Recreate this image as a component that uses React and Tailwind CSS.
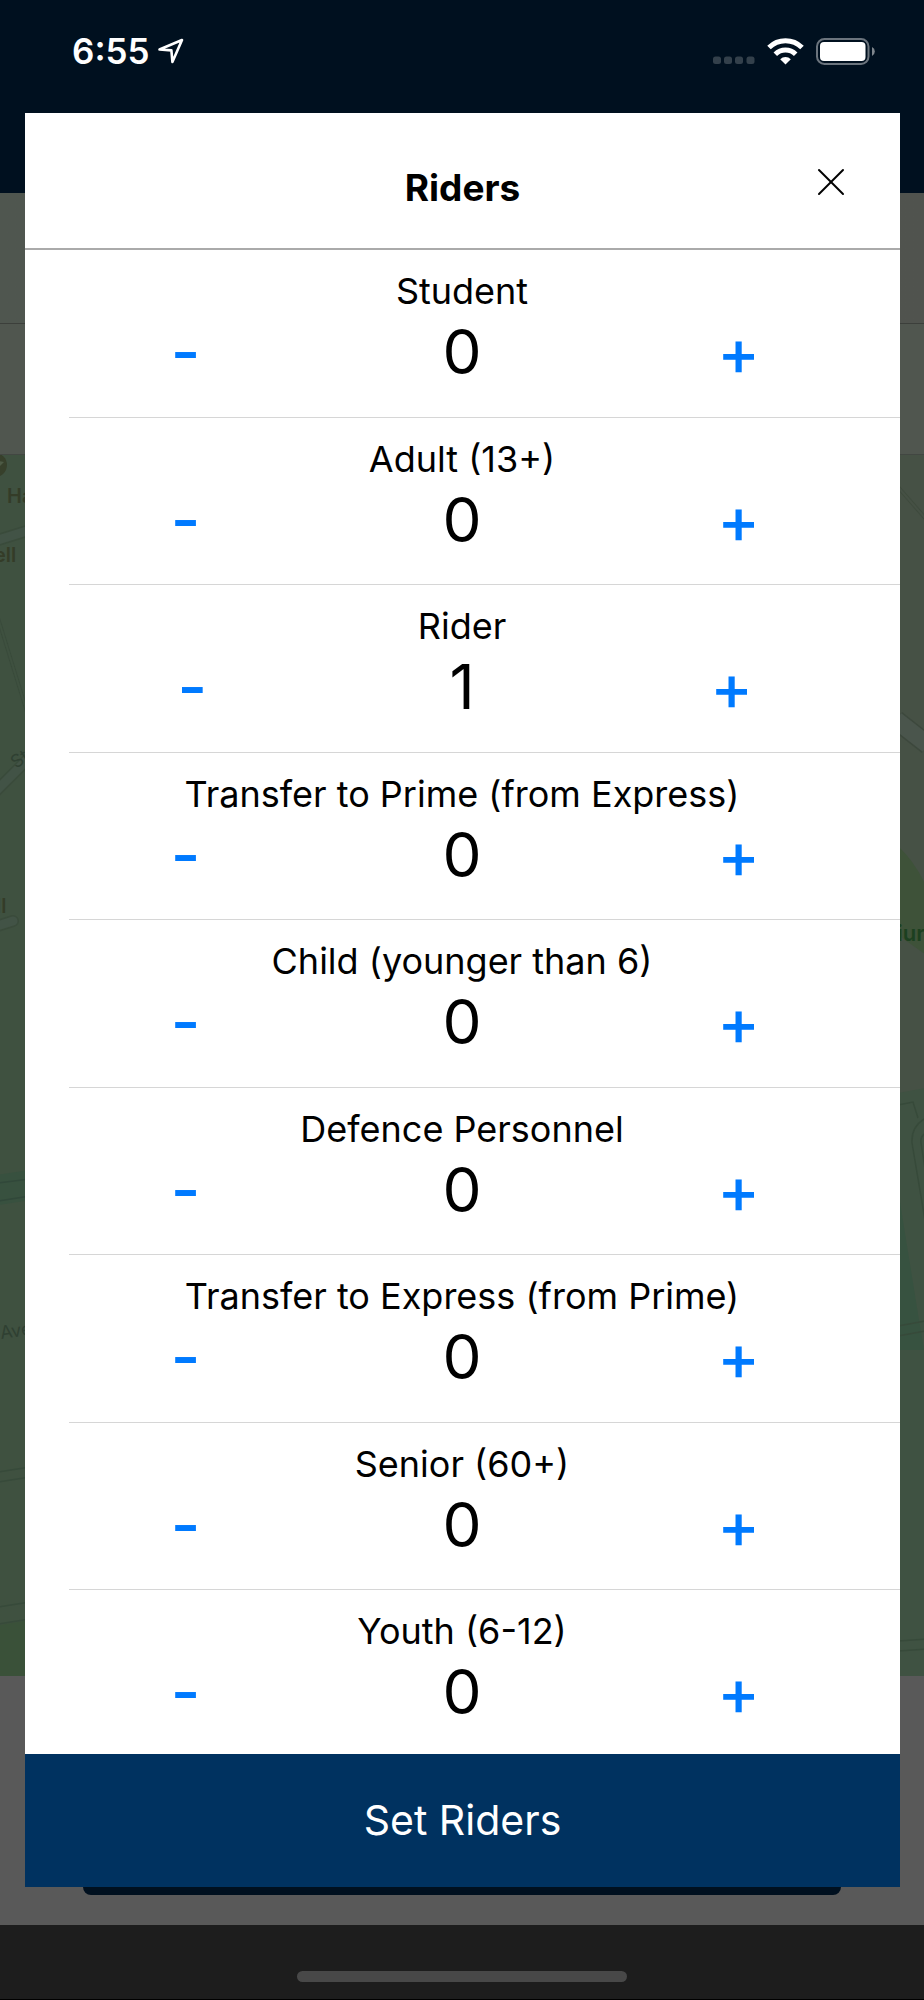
import { useState } from "react"
import { LuX } from "react-icons/lu"

const initialRiders = [
    { id: 'student', label: 'Student', count: 0 },
    { id: 'adult', label: 'Adult (13+)', count: 0 },
    { id: 'rider', label: 'Rider', count: 1 },
    { id: 'to-prime', label: 'Transfer to Prime (from Express)', count: 0 },
    { id: 'child', label: 'Child (younger than 6)', count: 0 },
    { id: 'defence', label: 'Defence Personnel', count: 0 },
    { id: 'to-express', label: 'Transfer to Express (from Prime)', count: 0 },
    { id: 'senior', label: 'Senior (60+)', count: 0 },
    { id: 'youth', label: 'Youth (6-12)', count: 0 },
]

function StatusBar() {
    return (
        <div className="flex h-[193px] items-start justify-between bg-[#00101f] pl-[72px] pr-12 pt-[31px] text-white">
            <div className="flex h-10 items-center gap-2">
                <span className="text-[35px] font-semibold">6:55</span>
                <svg width="26" height="26" viewBox="0 0 26 26" fill="none" stroke="currentColor" strokeWidth="2.6" strokeLinejoin="round">
                    <path d="M1.5 11.5 L24 2 L14.4 24 L13.4 12.4 Z" />
                </svg>
            </div>
            <div className="flex h-10 items-center gap-3">
                <svg width="42" height="26" viewBox="0 0 42 26" fill="#33404b">
                    <rect x="0" y="18.5" width="8" height="7.5" rx="2.5" />
                    <rect x="11" y="18.5" width="8" height="7.5" rx="2.5" />
                    <rect x="22" y="18.5" width="8" height="7.5" rx="2.5" />
                    <rect x="33.5" y="18.5" width="8" height="7.5" rx="2.5" />
                </svg>
                <svg width="37" height="27" viewBox="0 0 37 27" fill="none" stroke="currentColor" strokeWidth="5">
                    <path d="M2 9.5 A23.5 23.5 0 0 1 35 9.5" />
                    <path d="M8.3 16.2 A14.5 14.5 0 0 1 28.7 16.2" />
                    <path d="M18.5 26.5 L13.2 21.2 A7.6 7.6 0 0 1 23.8 21.2 Z" fill="currentColor" stroke="none" />
                </svg>
                <svg width="60" height="27" viewBox="0 0 60 27">
                    <rect x="1" y="1" width="51.5" height="25" rx="7.5" fill="none" stroke="#6b747d" strokeWidth="2" />
                    <rect x="4" y="4" width="45.5" height="19" rx="4" fill="#fff" />
                    <path d="M56 9 A5 5 0 0 1 56 18 Z" fill="#7f868d" />
                </svg>
            </div>
        </div>
    )
}

function Map() {
    return (
        <svg className="min-h-0 w-full flex-1" viewBox="0 455 924 1221" preserveAspectRatio="xMidYMid slice" aria-hidden="true">
            <rect x="0" y="455" width="462" height="1221" fill="#3f5140" />
            <rect x="462" y="455" width="462" height="1221" fill="#465145" />

            {/* West side */}
            <circle cx="-5" cy="465" r="12" fill="#37402b" />
            <path d="M-2 461 L4 462 L0 466 Z" fill="#4d5a45" />
            <g fill="none">
                <path d="M-2 540 L30 530" stroke="#3a4b3b" strokeWidth="12" />
                <path d="M-2 540 L30 530" stroke="#425346" strokeWidth="9" />
                <path d="M-2 618 L27 712" stroke="#3a4b3b" strokeWidth="4" />
                <path d="M-2 618 L27 712" stroke="#3f5140" strokeWidth="2" />
                <path d="M-6 793 L30 757" stroke="#3a4b3b" strokeWidth="12" />
                <path d="M-6 793 L30 757" stroke="#425346" strokeWidth="9" />
                <path d="M-6 927 L13 921" stroke="#3a4b3b" strokeWidth="12" strokeLinecap="round" />
                <path d="M-6 927 L13 921" stroke="#425346" strokeWidth="9" strokeLinecap="round" />
                <path d="M-2 1190 L30 1185" stroke="#38513f" strokeWidth="30" />
                <path d="M-2 1183 L30 1179 M-2 1201 L30 1196" stroke="#31483a" strokeWidth="1.5" />
                <path d="M-2 1472 L30 1467 M-2 1482 L30 1477" stroke="#374a3a" strokeWidth="1.5" />
                <path d="M-2 1607 L30 1602 M-2 1624 L30 1619" stroke="#374a3a" strokeWidth="1.5" />
            </g>
            <path d="M0 1625 L30 1620 V1676 H0 Z" fill="#3a5139" />
            <g fontSize="20" fontWeight="600" fill="#343c28">
                <text x="7" y="503">Ha</text>
                <text x="-6" y="562">ell</text>
                <text x="-4" y="913">ll</text>
            </g>
            <g fontSize="18" fill="#2f4032">
                <text x="16" y="769" transform="rotate(-35 16 769)">St</text>
                <text x="1" y="1339" transform="rotate(-8 1 1339)">Ave</text>
            </g>

            {/* East side */}
            <g fill="none">
                <path d="M898 487 L926 519" stroke="#3f4b3e" strokeWidth="4" />
                <path d="M898 487 L926 519" stroke="#465145" strokeWidth="2" />
                <path d="M896 720 L928 745" stroke="#3d483d" strokeWidth="20" />
                <path d="M896 720 L928 745" stroke="#4a554c" strokeWidth="17" />
            </g>
            <path d="M898 846 Q915 862 926 886 V955 L898 935 Z" fill="#3e5239" />
            <text x="897" y="941" fontSize="22" fontWeight="600" fill="#1c4020">iur</text>
            <path d="M898 1093 L926 1088 V1676 H898 Z" fill="#3f5242" />
            <path d="M898 1190 L919 1320 L924 1350 H898 Z" fill="#375240" />
            <g fill="none" stroke="#374a3a" strokeWidth="1.5">
                <path d="M898 1105 L913 1102 L918 1118" />
                <path d="M926 1118 Q911 1126 912 1143 L926 1226" />
                <path d="M926 1133 Q920 1136 921 1143 L926 1175" />
                <path d="M898 1326 L926 1321 M898 1336 L926 1331" />
                <path d="M898 1641 L926 1639 M898 1651 L926 1649" />
            </g>
        </svg>
    )
}

function RiderRow({ rider, onChange }) {
    return (
        <li className="flex pl-[44px]">
            <div className="flex flex-1 flex-col items-center border-b border-[#d6d6d6] pr-[45px] pt-[19px]">
                <span id={rider.id} className="text-[36px] leading-[44px]">{rider.label}</span>
                <div className="flex items-center justify-center gap-[237px] leading-[78px]" role="group" aria-labelledby={rider.id}>
                    <button
                        onClick={() => onChange(rider.id, -1)}
                        aria-label="Remove one"
                        className="w-10 text-[64px] font-medium text-[#007aff]"
                    >
                        -
                    </button>
                    <output className="text-[62px]">{rider.count}</output>
                    <button
                        onClick={() => onChange(rider.id, 1)}
                        aria-label="Add one"
                        className="flex w-10 justify-center text-[64px] font-medium text-[#007aff]"
                    >
                        +
                    </button>
                </div>
            </div>
        </li>
    )
}

export default function App() {
    const [riders, setRiders] = useState(initialRiders)

    const handleChange = (id, step) => {
        setRiders((prev) => prev.map((r) => (r.id === id ? { ...r, count: Math.max(0, r.count + step) } : r)))
    }

    return (
        <div className="relative flex min-h-screen flex-col font-[Inter,sans-serif]">
            {/* Dimmed booking screen */}
            <StatusBar />
            <div className="h-[131px] border-b border-[#3c3f3b] bg-linear-to-r from-[#4f564f] to-[#50534e]" />
            <div className="h-[131px] border-b border-[#424742] bg-[#50564f]" />
            <Map />
            <div className="h-[249px] bg-[#595959] px-[83px] pb-[30px]">
                <div className="h-full rounded-b-lg bg-[#00101f]" />
            </div>
            <div className="flex h-[75px] items-end justify-center border-b border-black bg-[#1d1d1d] pb-[17px]">
                <div className="h-[11px] w-[330px] rounded-full bg-[#484848]" />
            </div>

            {/* Riders dialog */}
            <div role="dialog" aria-labelledby="riders-title" className="absolute inset-y-[113px] left-[25px] right-6 flex flex-col bg-white text-black">
                <header className="flex h-[137px] items-center border-b-2 border-[#aaaaaa] px-[49px] pt-[14px]">
                    <span className="w-10" />
                    <h1 id="riders-title" className="flex-1 text-center text-[37px] font-bold">Riders</h1>
                    <button aria-label="Close" className="flex w-10 justify-center pb-3">
                        <LuX size={48} strokeWidth={1} className="shrink-0" />
                    </button>
                </header>
                <ul className="-mb-1 grid flex-1 auto-rows-fr">
                    {riders.map((rider) => (
                        <RiderRow key={rider.id} rider={rider} onChange={handleChange} />
                    ))}
                </ul>
                <button className="relative h-[133px] bg-[#003260] pt-px text-[41px] text-white">Set Riders</button>
            </div>
        </div>
    )
}
